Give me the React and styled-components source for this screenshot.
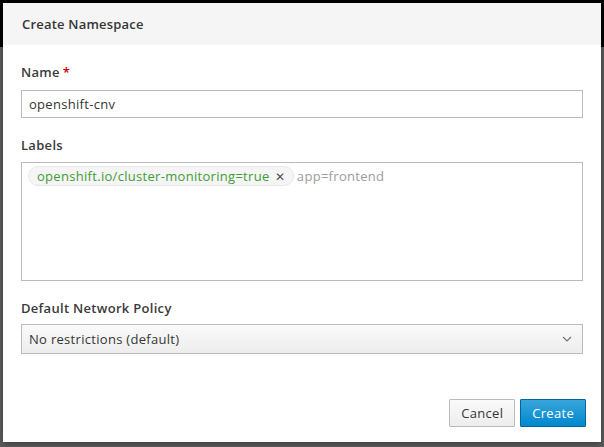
import React from 'react';
import styled, { createGlobalStyle } from 'styled-components';

const GlobalStyle = createGlobalStyle`
  html, body {
    margin: 0;
    padding: 0;
  }
  body {
    background: linear-gradient(#000 0, #000 47px, #5c5c5c 47px, #5c5c5c 100%);
    min-height: 447px;
    font-family: "Open Sans", "Liberation Sans", sans-serif;
    font-size: 13px;
    letter-spacing: 0.3px;
    color: #363636;
  }
`;

const Backdrop = styled.div`
  padding: 3px;
  height: 447px;
  box-sizing: border-box;
`;

const Modal = styled.div`
  width: 598px;
  height: 439px;
  background: #fff;
  display: flex;
  flex-direction: column;
  box-shadow: 0 2px 6px rgba(0, 0, 0, 0.35);
`;

const Header = styled.div`
  height: 42px;
  background: #f5f5f5;
  display: flex;
  align-items: center;
  padding: 0 19px;
`;

const Title = styled.h1`
  margin: 0;
  font-size: 13px;
  font-weight: 600;
  color: #363636;
  letter-spacing: 0.2px;
`;

const Body = styled.div`
  flex: 1;
  padding: 18px 18px 0 18px;
  display: flex;
  flex-direction: column;
`;

const Label = styled.label`
  display: block;
  line-height: 18px;
  font-weight: 600;
  color: #3a3a3a;
  margin: ${p => p.$first ? '0' : '18px'} 0 ${p => p.$gap || 8}px;
`;

const Required = styled.span`
  color: #c00;
  margin-left: 3px;
`;

const TextInput = styled.input`
  box-sizing: border-box;
  width: 562px;
  height: 28px;
  border: 1px solid #bbb;
  padding: 0 7px;
  font: inherit;
  letter-spacing: inherit;
  color: #363636;
  outline: none;
`;

const TagBox = styled.div`
  box-sizing: border-box;
  width: 562px;
  height: 119px;
  border: 1px solid #bbb;
  padding: 3px 6px;
  display: flex;
  align-items: flex-start;
  gap: 3px;
`;

const Tag = styled.span`
  display: inline-flex;
  align-items: center;
  height: 20px;
  box-sizing: border-box;
  padding: 0 8px;
  border: 1px solid #e8e8e8;
  border-radius: 10px;
  background: #f5f5f5;
  color: #3f9c35;
  gap: 5px;
`;

const TagClose = styled.span`
  color: #4d5258;
  font-size: 12px;
`;

const TagPlaceholder = styled.span`
  color: #9c9c9c;
  line-height: 20px;
`;

const Select = styled.div`
  box-sizing: border-box;
  width: 562px;
  height: 30px;
  border: 1px solid #bbb;
  background: linear-gradient(#fafafa, #ededed);
  display: flex;
  align-items: center;
  justify-content: space-between;
  padding: 0 10px 0 7px;
  color: #363636;
`;

const Footer = styled.div`
  display: flex;
  justify-content: flex-end;
  gap: 5px;
  padding: 0 15px 15px;
`;

const Button = styled.button`
  height: 28px;
  box-sizing: border-box;
  font: inherit;
  letter-spacing: inherit;
  padding: 0 11px;
  border: 1px solid ${p => p.$primary ? '#00659c' : '#bbb'};
  background: ${p => p.$primary
    ? 'linear-gradient(#39a5dc, #0088ce)'
    : 'linear-gradient(#fafafa, #ededed)'};
  color: ${p => p.$primary ? '#fff' : '#363636'};
  border-radius: 1px;
`;

const Chevron = () => (
  <svg width="10" height="6" viewBox="0 0 10 6">
    <path d="M1 1l4 4 4-4" fill="none" stroke="#72767b" strokeWidth="1.2" />
  </svg>
);

export default function App() {
  return (
    <>
      <GlobalStyle />
      <Backdrop>
        <Modal>
          <Header>
            <Title>Create Namespace</Title>
          </Header>
          <Body>
            <Label $first $gap={9}>Name<Required>*</Required></Label>
            <TextInput defaultValue="openshift-cnv" />
            <Label>Labels</Label>
            <TagBox>
              <Tag>
                openshift.io/cluster-monitoring=true
                <TagClose>✕</TagClose>
              </Tag>
              <TagPlaceholder>app=frontend</TagPlaceholder>
            </TagBox>
            <Label $gap={7}>Default Network Policy</Label>
            <Select>
              <span>No restrictions (default)</span>
              <Chevron />
            </Select>
          </Body>
          <Footer>
            <Button>Cancel</Button>
            <Button $primary>Create</Button>
          </Footer>
        </Modal>
      </Backdrop>
    </>
  );
}
